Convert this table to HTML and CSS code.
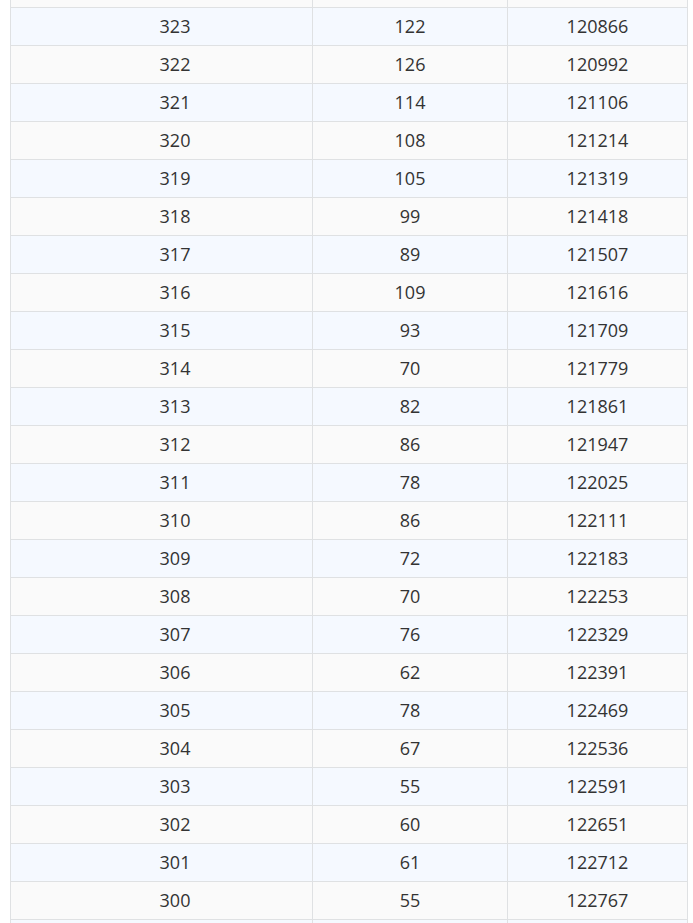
FILE: index.html
```html
<!DOCTYPE html>
<html>
<head>
<meta charset="utf-8">
<link rel="stylesheet" href="styles.css">
</head>
<body>
<div class="wrap">
<table class="data">
<colgroup><col class="c1"><col class="c2"><col class="c3"></colgroup>
<tbody>
<tr class="even edge"><td></td><td></td><td></td></tr>
<tr class="odd"><td>323</td><td>122</td><td>120866</td></tr>
<tr class="even"><td>322</td><td>126</td><td>120992</td></tr>
<tr class="odd"><td>321</td><td>114</td><td>121106</td></tr>
<tr class="even"><td>320</td><td>108</td><td>121214</td></tr>
<tr class="odd"><td>319</td><td>105</td><td>121319</td></tr>
<tr class="even"><td>318</td><td>99</td><td>121418</td></tr>
<tr class="odd"><td>317</td><td>89</td><td>121507</td></tr>
<tr class="even"><td>316</td><td>109</td><td>121616</td></tr>
<tr class="odd"><td>315</td><td>93</td><td>121709</td></tr>
<tr class="even"><td>314</td><td>70</td><td>121779</td></tr>
<tr class="odd"><td>313</td><td>82</td><td>121861</td></tr>
<tr class="even"><td>312</td><td>86</td><td>121947</td></tr>
<tr class="odd"><td>311</td><td>78</td><td>122025</td></tr>
<tr class="even"><td>310</td><td>86</td><td>122111</td></tr>
<tr class="odd"><td>309</td><td>72</td><td>122183</td></tr>
<tr class="even"><td>308</td><td>70</td><td>122253</td></tr>
<tr class="odd"><td>307</td><td>76</td><td>122329</td></tr>
<tr class="even"><td>306</td><td>62</td><td>122391</td></tr>
<tr class="odd"><td>305</td><td>78</td><td>122469</td></tr>
<tr class="even"><td>304</td><td>67</td><td>122536</td></tr>
<tr class="odd"><td>303</td><td>55</td><td>122591</td></tr>
<tr class="even"><td>302</td><td>60</td><td>122651</td></tr>
<tr class="odd"><td>301</td><td>61</td><td>122712</td></tr>
<tr class="even"><td>300</td><td>55</td><td>122767</td></tr>
<tr class="odd edge"><td></td><td></td><td></td></tr>
</tbody>
</table>
</div>
</body>
</html>
```
FILE: styles.css
```css
html, body {
  margin: 0;
  padding: 0;
  background: #ffffff;
  overflow: hidden;
}
.wrap {
  padding-left: 10px;
  margin-top: -31px;
}
.data {
  border-collapse: collapse;
  width: 677px;
  table-layout: fixed;
  font-family: "Open Sans", "Noto Sans", sans-serif;
  font-size: 18px;
  color: #333333;
}
.c1 { width: 302px; }
.c2 { width: 195px; }
.c3 { width: 180px; }
.data td {
  border: 1px solid #dfe1e3;
  height: 36px;
  padding: 0 0 1px 0;
  text-align: center;
  vertical-align: middle;
  line-height: 18px;
}
.data td:first-child {
  padding-left: 27px;
}
.odd { background: #f5f9ff; }
.even { background: #fafafa; }
```
